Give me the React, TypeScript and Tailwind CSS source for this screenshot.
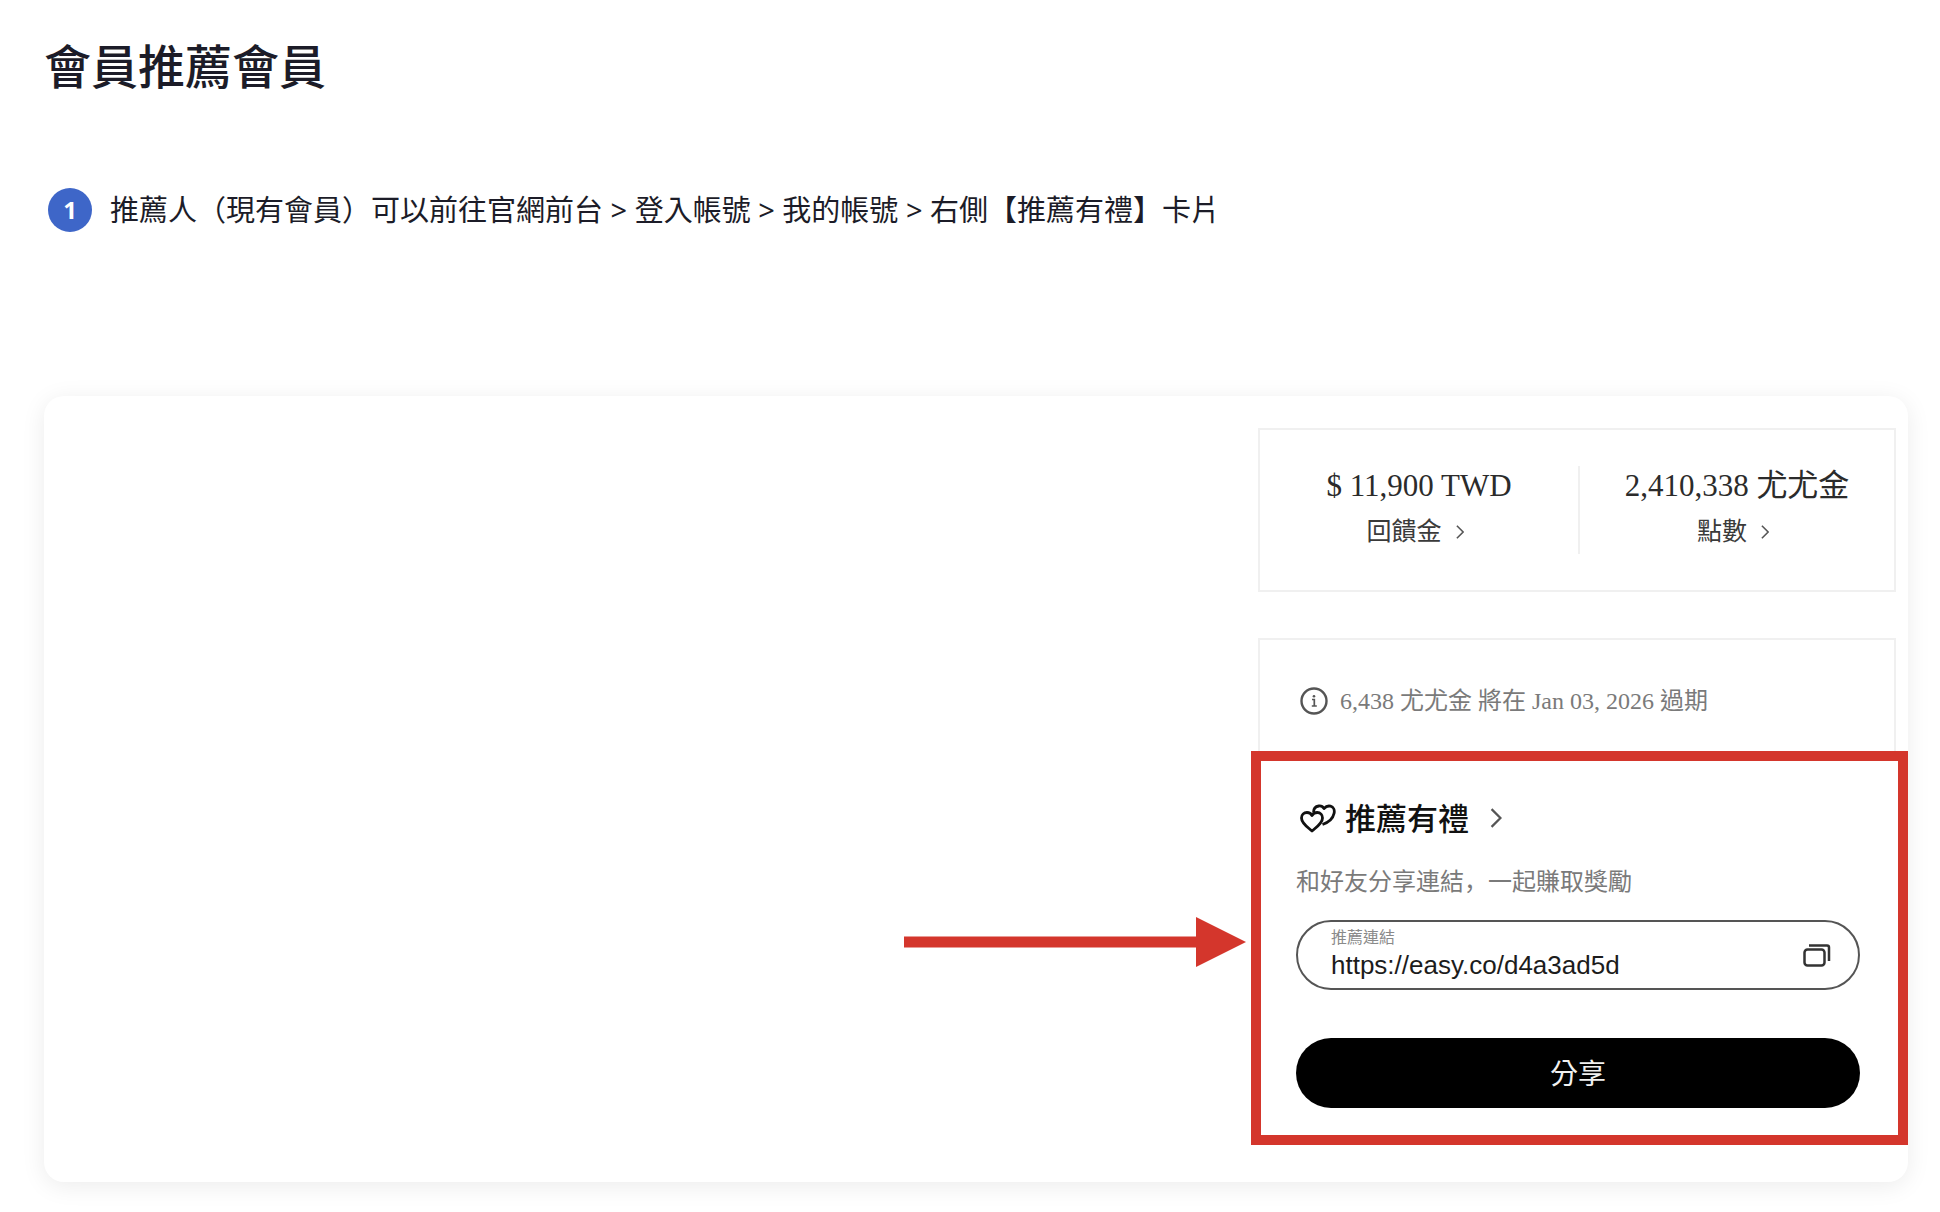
import { useState } from 'react';

const REFERRAL_URL = 'https://easy.co/d4a3ad5d';

const balances = [
  { amount: '$ 11,900 TWD', label: '回饋金' },
  { amount: '2,410,338 尤尤金', label: '點數' },
];

function Chevron({ className }: { className: string }) {
  return (
    <svg viewBox="0 0 10 18" fill="none" stroke="currentColor" strokeWidth="2" className={className} aria-hidden="true">
      <path d="M1 1l8 8-8 8" />
    </svg>
  );
}

function InfoIcon() {
  return (
    <svg viewBox="0 0 28 28" fill="none" stroke="currentColor" className="size-7 shrink-0" aria-hidden="true">
      <circle cx="14" cy="14" r="12.5" strokeWidth="2.4" />
      <path d="M12 12.5h2.3v6.5M11.8 19h5" strokeWidth="1.7" />
      <circle cx="14" cy="9.3" r="1.3" fill="currentColor" stroke="none" />
    </svg>
  );
}

function HeartsIcon() {
  return (
    <svg viewBox="0 0 36 30" fill="none" stroke="currentColor" strokeWidth="2.8" strokeLinejoin="round" className="h-[30px] w-9 shrink-0" aria-hidden="true">
      <path d="M12 28C8 24.5 1.5 20.5 1.5 15C1.5 11.500 4 9.500 7 9.500C9.300 9.500 11 10.500 12 12.500C13.200 10.500 15 9.500 17.200 9.500C20.500 9.500 22.500 12 22.500 15C22.500 20.500 16 24.500 12 28Z" />
      <path d="M13.500 9.500C13.500 6 15.500 3.500 18.800 3C21 2.700 22.800 3.600 24 5.500C25.800 3.500 28 2.600 30.500 3.200C33.500 4 34.800 7 34.100 10.300C33 15.500 28.500 19.500 22.500 21.500" />
    </svg>
  );
}

function CopyIcon() {
  return (
    <svg viewBox="0 0 28 24" fill="none" stroke="currentColor" strokeWidth="2.5" className="h-6 w-7" aria-hidden="true">
      <rect x="1.500" y="6.500" width="20" height="16" rx="3" />
      <path d="M6 2.500H24a2 2 0 0 1 2 2V18" />
    </svg>
  );
}

function Arrow() {
  return (
    <svg viewBox="0 0 342 50" fill="#d4362c" className="mt-[521px] mr-[5px] h-[50px] w-[342px] shrink-0" aria-hidden="true">
      <path d="M0 19.500H292V0L342 25L292 50V30.500H0Z" />
    </svg>
  );
}

function BalanceCard() {
  return (
    <section className="mr-3 ml-[7px] flex h-[164px] items-center border-2 border-[#f0f0f0] font-['Liberation_Serif','Noto_Sans_CJK_TC',serif]">
      {balances.map((item, i) => (
        <div
          key={item.label}
          className={
            i === 0
              ? 'flex h-[88px] w-80 shrink-0 flex-col items-center border-r-2 border-[#f0f0f0]'
              : 'flex h-[88px] flex-1 flex-col items-center'
          }
        >
          <p className="text-[31px] leading-10 text-[#2b2b2b]">{item.amount}</p>
          <a href="#" className="mt-2 flex items-center gap-3.5 pr-2 text-[25px] leading-9 text-[#3a3a3a]">
            {item.label}
            <Chevron className="h-3.5 w-2 text-[#555]" />
          </a>
        </div>
      ))}
    </section>
  );
}

function ExpiryCard() {
  return (
    <section className="mt-[46px] mr-3 ml-[7px] flex h-[113px] gap-3 border-2 border-b-0 border-[#f0f0f0] pt-[45px] pl-10 font-['Liberation_Serif','Noto_Sans_CJK_TC',serif] text-2xl leading-8 text-[#7a7a7a]">
      <span className="flex h-8 items-center text-[#555]">
        <InfoIcon />
      </span>
      <p>6,438 尤尤金 將在 Jan 03, 2026 過期</p>
    </section>
  );
}

function ReferralCard() {
  const [copied, setCopied] = useState(false);

  const handleCopy = async () => {
    try {
      await navigator.clipboard.writeText(REFERRAL_URL);
      setCopied(true);
    } catch (e) {
      console.error(e);
    }
  };

  return (
    <section className="border-[10px] border-[#d4362c] pt-[37px] pr-[38px] pb-[27px] pl-[35px]">
      <h2>
        <a href="#" className="flex items-center pl-1 text-[31px] leading-10 font-medium text-[#111]">
          <HeartsIcon />
          <span className="ml-[9px]">推薦有禮</span>
          <Chevron className="ml-[21px] h-5 w-3 text-[#555]" />
        </a>
      </h2>
      <p lang="zh-Hans" className="mt-7 font-['Noto_Sans_CJK_SC',sans-serif] text-2xl leading-7 text-[#7a7a7a]">
        和好友分享連結，一起賺取獎勵
      </p>

      <div className="mt-[26px] flex h-[70px] items-center rounded-full border-2 border-[#555] pr-[27px] pl-[33px]">
        <div className="flex flex-1 flex-col">
          <label htmlFor="referral-link" className="text-base leading-5 text-[#8a8a8a]">
            推薦連結
          </label>
          <input
            id="referral-link"
            type="text"
            readOnly
            value={REFERRAL_URL}
            className="h-9 w-full bg-transparent font-['Liberation_Sans',sans-serif] text-[26px] leading-9 text-[#1c1c1c] outline-none"
          />
        </div>
        <button type="button" onClick={handleCopy} aria-label={copied ? '已複製' : '複製連結'} className="text-[#333]">
          <CopyIcon />
        </button>
      </div>

      <button type="button" className="mt-12 h-[70px] w-full rounded-full bg-black text-[28px] leading-10 text-[#f0f0f0]">
        分享
      </button>
    </section>
  );
}

export default function App() {
  return (
    <main
      lang="zh-Hant"
      className="min-h-screen bg-white pt-9 pr-8 pb-[30px] pl-11 font-['Noto_Sans','Noto_Sans_CJK_TC',sans-serif] text-[#1c1c28]"
    >
      <h1 className="text-[47px] leading-[60px] font-medium">會員推薦會員</h1>

      <ol className="mt-[92px] ml-1">
        <li className="flex items-center gap-[18px]">
          <span className="flex size-11 shrink-0 items-center justify-center rounded-full bg-[#3e66c8] text-2xl font-bold text-white">
            1
          </span>
          <p className="text-[29px] leading-10">
            推薦人（現有會員）可以前往官網前台 &gt; 登入帳號 &gt; 我的帳號 &gt; 右側【推薦有禮】卡片
          </p>
        </li>
      </ol>

      <div className="mt-[164px] flex justify-end rounded-[20px] bg-white shadow-[0_4px_24px_rgba(0,0,0,0.08)]">
        <Arrow />
        <div className="w-[657px] shrink-0 pt-8 pb-[37px]">
          <BalanceCard />
          <ExpiryCard />
          <ReferralCard />
        </div>
      </div>
    </main>
  );
}
